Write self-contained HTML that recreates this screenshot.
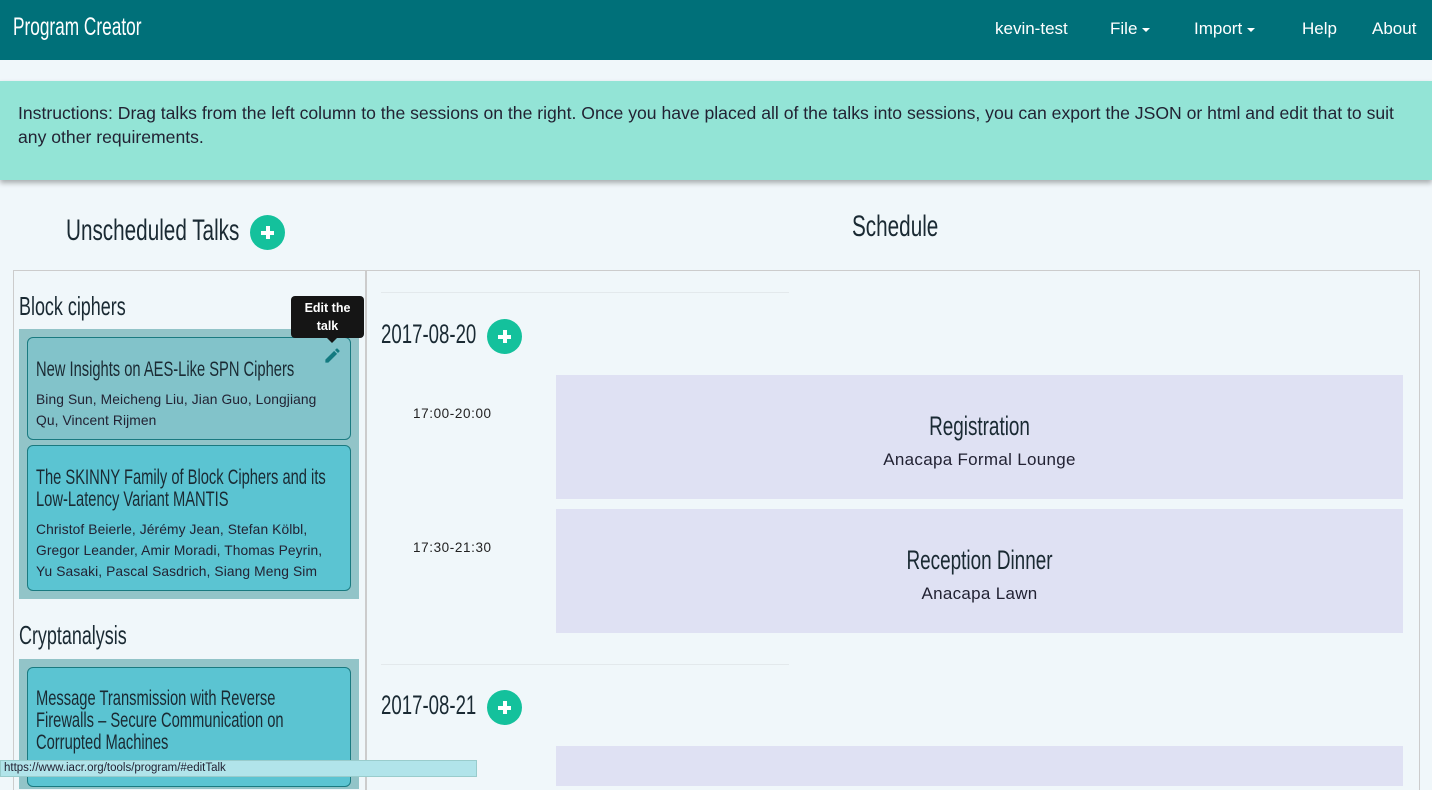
<!DOCTYPE html>
<html><head><meta charset="utf-8"><style>
*{margin:0;padding:0;box-sizing:border-box}
body{width:1432px;height:777px;overflow:hidden;background:#f0f7fa;font-family:"Liberation Sans",sans-serif;position:relative;color:#222}
.a{position:absolute}
.n{transform:scaleX(0.69);transform-origin:0 0;color:#1a2a33;white-space:nowrap}
.nav{left:0;top:0;width:1432px;height:60px;background:#007079;color:#fff}
.nav span{position:absolute;top:19px;font-size:17px}
.caret{display:inline-block;width:0;height:0;border-left:4px solid transparent;border-right:4px solid transparent;border-top:4px solid #fff;vertical-align:middle;margin-left:5px}
.plus{position:absolute;width:35px;height:35px;border-radius:50%;background:#14c19c}
.plus:before{content:"";position:absolute;left:11px;top:15.5px;width:13px;height:4px;background:#fff}
.plus:after{content:"";position:absolute;left:15.5px;top:11px;width:4px;height:13px;background:#fff}
.card{position:absolute;left:27px;width:324px;border:1px solid #1a7a80;border-radius:6px;background:#5bc4d2;padding:0 8px}
.card h4{font-weight:normal;font-size:21px;line-height:22px;color:#1a2a33;margin-top:21px;transform:scaleX(0.70);transform-origin:0 0;white-space:nowrap}
.card p{font-size:13.8px;line-height:21px;color:#223;margin-top:8px;letter-spacing:0.1px;white-space:nowrap}
.sess{position:absolute;left:556px;width:847px;background:#dfe1f3;text-align:center}
.sess h3{font-weight:normal;font-size:27px;color:#1a2a33;margin-top:36px;transform:scaleX(0.70)}
.sess div{font-size:17px;color:#223;margin-top:8px;letter-spacing:0.3px}
.time{position:absolute;left:413px;font-size:13.5px;color:#222;letter-spacing:0.6px}
</style></head><body>
<div class="a nav">
<span class="n" style="left:13px;top:13px;font-size:25px;color:#fff">Program Creator</span>
<span style="left:995px">kevin-test</span>
<span style="left:1110px">File<i class="caret"></i></span>
<span style="left:1194px">Import<i class="caret"></i></span>
<span style="left:1302px">Help</span>
<span style="left:1372px">About</span>
</div>
<div class="a" style="left:0;top:81px;width:1432px;height:99px;background:#93e4d6;box-shadow:0 3px 5px rgba(0,0,0,.3);padding:20px 18px;font-size:17.6px;line-height:24px;color:#223;white-space:nowrap">Instructions: Drag talks from the left column to the sessions on the right. Once you have placed all of the talks into sessions, you can export the JSON or html and edit that to suit<br>any other requirements.</div>
<div class="a n" style="left:66px;top:214px;font-size:30px">Unscheduled Talks</div>
<div class="plus" style="left:250px;top:215px"></div>
<div class="a n" style="left:852px;top:210px;font-size:30px">Schedule</div>
<div class="a" style="left:13px;top:270px;width:353px;height:520px;border:1px solid #ccc;border-bottom:none"></div>
<div class="a" style="left:365px;top:270px;width:1055px;height:520px;border:1px solid #ccc;border-left:2px solid #ccc;border-bottom:none"></div>
<div class="a n" style="left:19px;top:291px;font-size:26px">Block ciphers</div>
<div class="a" style="left:19px;top:329px;width:340px;height:270px;background:#92c4c8"></div>
<div class="card" style="top:337px;height:103px;background:#82c3ca"><h4>New Insights on AES-Like SPN Ciphers</h4><p>Bing Sun, Meicheng Liu, Jian Guo, Longjiang<br>Qu, Vincent Rijmen</p></div>
<svg class="a" style="left:323px;top:346px" width="19" height="19" viewBox="0 0 24 24"><path fill="#137a80" d="M3 17.25V21h3.75L17.81 9.94l-3.75-3.75L3 17.25zM20.71 7.04a1 1 0 000-1.41l-2.34-2.34a1 1 0 00-1.41 0l-1.830 1.83 3.75 3.75 1.83-1.83z"/></svg>
<div class="card" style="top:445px;height:146px"><h4>The SKINNY Family of Block Ciphers and its<br>Low-Latency Variant MANTIS</h4><p>Christof Beierle, Jérémy Jean, Stefan Kölbl,<br>Gregor Leander, Amir Moradi, Thomas Peyrin,<br>Yu Sasaki, Pascal Sasdrich, Siang Meng Sim</p></div>
<div class="a" style="left:291px;top:296px;width:73px;height:42px;background:#151515;border-radius:4px;color:#fff;font-weight:bold;font-size:12.5px;line-height:18px;text-align:center;padding-top:3px">Edit the<br>talk</div>
<div class="a" style="left:327px;top:338px;width:0;height:0;border-left:5px solid transparent;border-right:5px solid transparent;border-top:5px solid #151515"></div>
<div class="a n" style="left:19px;top:620px;font-size:26px">Cryptanalysis</div>
<div class="a" style="left:19px;top:659px;width:340px;height:130px;background:#92c4c8"></div>
<div class="card" style="top:667px;height:120px"><h4 style="margin-top:20px">Message Transmission with Reverse<br>Firewalls – Secure Communication on<br>Corrupted Machines</h4></div>
<div class="a" style="left:381px;top:292px;width:408px;height:1px;background:#e3e9ec"></div>
<div class="a n" style="left:381px;top:319px;font-size:27px">2017-08-20</div>
<div class="plus" style="left:487px;top:319px"></div>
<div class="time" style="top:406px">17:00-20:00</div>
<div class="sess" style="top:375px;height:124px"><h3>Registration</h3><div>Anacapa Formal Lounge</div></div>
<div class="time" style="top:540px">17:30-21:30</div>
<div class="sess" style="top:509px;height:124px"><h3>Reception Dinner</h3><div>Anacapa Lawn</div></div>
<div class="a" style="left:381px;top:664px;width:408px;height:1px;background:#e3e9ec"></div>
<div class="a n" style="left:381px;top:690px;font-size:27px">2017-08-21</div>
<div class="plus" style="left:487px;top:690px"></div>
<div class="sess" style="top:746px;height:40px"></div>
<div class="a" style="left:0;top:760px;width:477px;height:17px;background:#b1e4ea;border:1px solid #9cc;font-size:11.5px;padding-left:3px;line-height:15px;color:#223">https://www.iacr.org/tools/program/#editTalk</div>
</body></html>
